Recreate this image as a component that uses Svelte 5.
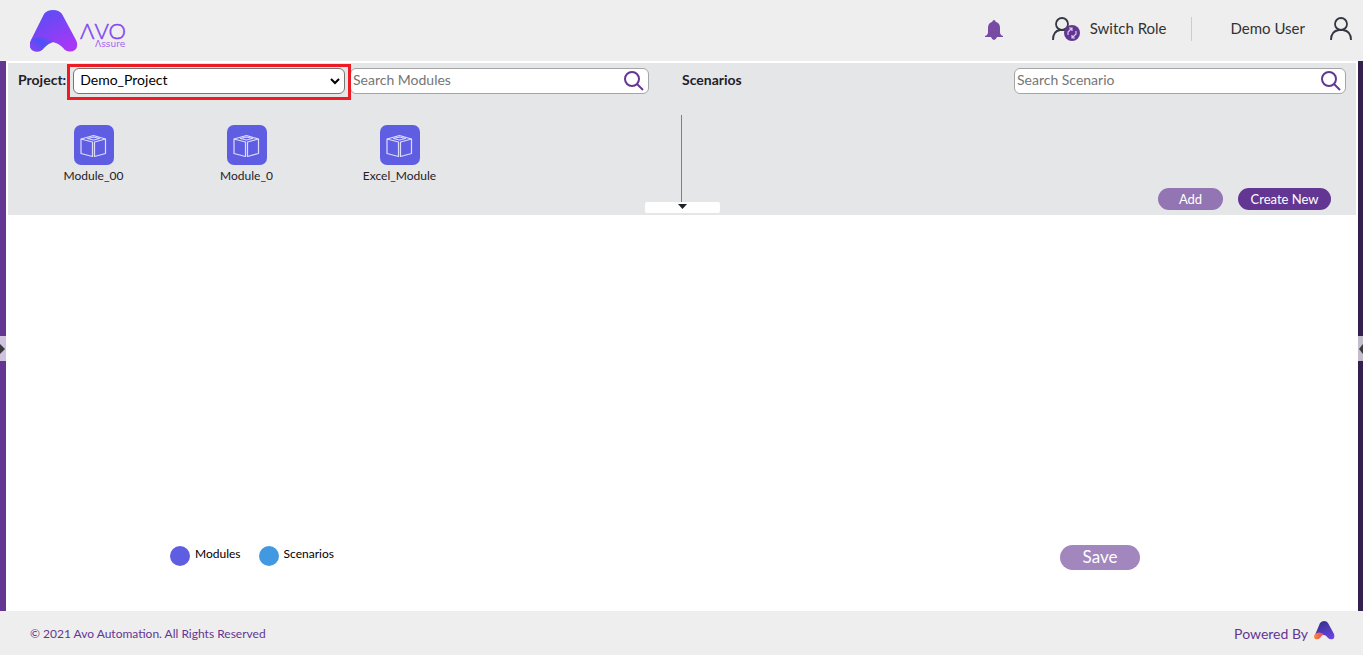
<script lang="ts">
    interface Module {
        id: number;
        name: string;
    }

    const projects = ["Demo_Project"];
    const modules: Module[] = [
        { id: 1, name: "Module_00" },
        { id: 2, name: "Module_0" },
        { id: 3, name: "Excel_Module" },
    ];
    const legend = [
        { label: "Modules", kind: "module" },
        { label: "Scenarios", kind: "scenario" },
    ];

    let project = $state("Demo_Project");
    let moduleQuery = $state("");
    let scenarioQuery = $state("");

    let shownModules = $derived(
        modules.filter((m) =>
            m.name.toLowerCase().includes(moduleQuery.toLowerCase()),
        ),
    );
</script>

{#snippet searchIcon()}
    <svg width="20" height="20" viewBox="0 0 20 20" aria-hidden="true">
        <circle cx="8" cy="8" r="7" />
        <path d="M13 13 L19 19" />
    </svg>
{/snippet}

<div class="page">
    <header>
        <svg class="logo" width="100" height="44" viewBox="0 0 100 44" role="img" aria-label="Avo Assure">
            <defs>
                <linearGradient id="mark" x1="0.3" y1="0" x2="0.9" y2="1">
                    <stop offset="0" stop-color="#5b4df5" />
                    <stop offset="1" stop-color="#b035f6" />
                </linearGradient>
                <linearGradient id="fold" x1="0" y1="0.8" x2="1" y2="0.2">
                    <stop offset="0" stop-color="#8a42f2" />
                    <stop offset="0.5" stop-color="#4d50f5" />
                    <stop offset="1" stop-color="#8a42f5" />
                </linearGradient>
            </defs>
            <path
                fill="url(#mark)"
                d="M14 5 Q17 1 23 1 Q29 1 32 5 L46 31 Q49 37 45 41 Q40 44 35 41 Q29 34 23 33 Q18 34 12 41 Q7 44 2 41 Q-2 37 1 31 Z"
            />
            <path
                fill="url(#fold)"
                d="M2 30 Q14 25 27 34 Q25 33 23 33 Q18 34 12 41 Q7 44 2 41 Q-2 37 2 30 Z"
            />
            <text class="brand" x="50" y="30">ΛVO</text>
            <text class="product" x="65" y="38">Λssure</text>
        </svg>

        <nav>
            <button class="bell" aria-label="Notifications">
                <svg width="20" height="20" viewBox="0 0 20 20">
                    <path
                        fill="#774ba3"
                        d="M10 0 Q11 0 12 2 Q16 3 16 8 L16 12 Q16 15 19 16 L19 17 L13 17 Q12 20 10 20 Q8 20 7 17 L1 17 L1 16 Q4 15 4 12 L4 8 Q4 3 8 2 Q9 0 10 0 Z"
                    />
                </svg>
            </button>
            <button class="switch">
                <svg width="28" height="24" viewBox="0 0 28 24" fill="none" stroke="#333740" stroke-width="1.8">
                    <circle cx="10" cy="7" r="6" />
                    <path d="M1 23 Q1 14 8 13 L13 13" />
                    <circle cx="20" cy="16" r="8" fill="#643693" stroke="none" />
                    <path
                        stroke="#d9c9ec"
                        stroke-width="1.2"
                        d="M16 18 L16 15 L20 11 M17 11 L20 11 L20 14 M24 14 L24 17 L20 21 M23 21 L20 21 L20 18"
                    />
                </svg>
                <span>Switch Role</span>
            </button>
            <span class="user">Demo User</span>
            <button class="profile" aria-label="Profile">
                <svg width="22" height="24" viewBox="0 0 22 24" fill="none" stroke="#333740" stroke-width="1.8">
                    <circle cx="11" cy="7" r="6" />
                    <path d="M1 23 Q1 14 9 13 L13 13 Q21 14 21 23" />
                </svg>
            </button>
        </nav>
    </header>

    <div class="body">
        <aside class="left">
            <button class="expand" aria-label="Open tasks">
                <svg width="6" height="12" viewBox="0 0 6 12"><path d="M0 1 L5 6 L0 11 Z" /></svg>
            </button>
        </aside>

        <main>
            <section class="panel">
                <div class="half">
                    <div class="toolbar">
                        <label class="title" for="project">Project:</label>
                        <div class="select-wrapper">
                            <select id="project" bind:value={project}>
                                {#each projects as name}
                                    <option value={name}>{name}</option>
                                {/each}
                            </select>
                            <svg class="chevron" width="10" height="8" viewBox="0 0 10 8" aria-hidden="true">
                                <path d="M1 1 L5 5 L9 1" />
                            </svg>
                        </div>
                        <div class="search">
                            <input type="text" placeholder="Search Modules" aria-label="Search Modules" bind:value={moduleQuery} />
                            {@render searchIcon()}
                        </div>
                    </div>
                    <div class="modules">
                        {#each shownModules as module (module.id)}
                            <button class="module">
                                <svg width="40" height="40" viewBox="0 0 40 40">
                                    <rect width="40" height="40" rx="7" fill="#5f5ee3" />
                                    <g fill="none" stroke="#dcdcfa" stroke-width="1.2" stroke-linejoin="round">
                                        <path d="M7 14 L18.5 17 L18.5 31.5 L7 28.5 Z" />
                                        <path d="M31.5 14 L20.5 17 L20.5 31.5 L31.5 28.5 Z" />
                                        <path d="M7 14 L19.5 10.5 L31.5 14" />
                                        <path d="M13.5 13.5 L19.5 12 L25.5 13.5 L19.5 15 Z" />
                                    </g>
                                </svg>
                                <span>{module.name}</span>
                            </button>
                        {/each}
                    </div>
                </div>

                <div class="half scenarios">
                    <div class="toolbar">
                        <span class="title">Scenarios</span>
                        <div class="search">
                            <input type="text" placeholder="Search Scenario" aria-label="Search Scenario" bind:value={scenarioQuery} />
                            {@render searchIcon()}
                        </div>
                    </div>
                    <div class="actions">
                        <button class="pill add">Add</button>
                        <button class="pill create">Create New</button>
                    </div>
                </div>

                <button class="collapse" aria-label="Toggle panel">
                    <svg width="9" height="5" viewBox="0 0 9 5"><path d="M0 0 L9 0 L4.5 5 Z" /></svg>
                </button>
            </section>

            <section class="canvas">
                <ul class="legend">
                    {#each legend as item}
                        <li><i class={item.kind}></i>{item.label}</li>
                    {/each}
                </ul>
                <button class="pill save">Save</button>
            </section>
        </main>

        <aside class="right">
            <button class="expand" aria-label="Open reference">
                <svg width="5" height="12" viewBox="0 0 5 12"><path d="M5 1 L1 6 L5 11 Z" /></svg>
            </button>
        </aside>
    </div>

    <footer>
        <span>© 2021 Avo Automation. All Rights Reserved</span>
        <span class="powered">
            Powered By
            <svg width="21" height="19" viewBox="0 0 21 19" aria-hidden="true">
                <defs>
                    <linearGradient id="small-mark" x1="0.3" y1="0" x2="0.8" y2="1">
                        <stop offset="0" stop-color="#33308a" />
                        <stop offset="1" stop-color="#6f43e8" />
                    </linearGradient>
                    <linearGradient id="small-fold">
                        <stop offset="0" stop-color="#fb8b35" />
                        <stop offset="1" stop-color="#e8456b" />
                    </linearGradient>
                </defs>
                <path
                    fill="url(#small-mark)"
                    d="M6 2 Q8 0 10 0 Q13 0 14 2 L20 13 Q21 17 19 18 Q16 19 14 17 Q12 14 10 14 L1 14 Z"
                />
                <path fill="url(#small-fold)" d="M1 13 Q5 10 10 13 Q8 14 6 17 Q4 19 1 18 Q-1 16 1 13 Z" />
            </svg>
        </span>
    </footer>
</div>

<style>
    :global(body) {
        margin: 0;
        font-family: Lato, "Liberation Sans", sans-serif;
        color: #1f2128;
    }

    .page {
        display: flex;
        flex-direction: column;
        min-height: 100vh;
    }

    button,
    input,
    select {
        font-family: inherit;
        color: inherit;
    }

    button {
        border: none;
        background: none;
        padding: 0;
        cursor: pointer;
    }

    svg {
        display: block;
        flex: none;
    }

    header {
        display: flex;
        align-items: center;
        justify-content: space-between;
        box-sizing: border-box;
        height: 61px;
        padding: 0 11px 0 30px;
        background: #eeeeee;
    }

    .brand {
        font-size: 22px;
        font-weight: 300;
        fill: #8045f2;
        stroke: #8045f2;
        stroke-width: 0.5;
    }

    .product {
        font-family: "DejaVu Sans", sans-serif;
        font-size: 9px;
        fill: #a562ee;
    }

    nav {
        display: flex;
        align-items: center;
        padding-bottom: 4px;
        font-size: 15px;
        color: #333333;
    }

    .bell {
        padding-top: 2px;
        margin-right: 48px;
    }

    .switch {
        display: flex;
        align-items: center;
        gap: 10px;
        padding-right: 24px;
        border-right: 1px solid #cccccc;
        font-size: 15px;
    }

    .switch span,
    .user {
        padding-bottom: 2px;
    }

    .user {
        margin: 0 25px 0 39px;
    }

    .body {
        display: flex;
        flex: 1;
    }

    aside {
        display: flex;
        align-items: center;
        width: 6px;
    }

    .left {
        background: #643693;
    }

    .right {
        width: 5px;
        background: #34204f;
    }

    .expand {
        display: flex;
        align-items: center;
        width: 100%;
        height: 25px;
        margin-bottom: -25px;
        background: #d1c3df;
        fill: #3b3b3b;
    }

    .right .expand {
        background: #c3bccb;
    }

    main {
        display: flex;
        flex-direction: column;
        flex: 1;
        padding: 2px 2px 0;
    }

    .panel {
        position: relative;
        display: grid;
        grid-template-columns: 1fr 1fr;
        height: 152px;
        background: #e5e6e8;
    }

    .half {
        display: flex;
        flex-direction: column;
        padding: 5px 33px 0 10px;
    }

    .scenarios {
        padding: 5px 10px 0 0;
    }

    .toolbar {
        display: flex;
        align-items: center;
        height: 26px;
    }

    .title {
        padding-bottom: 4px;
        font-size: 14px;
        font-weight: 700;
    }

    .select-wrapper {
        position: relative;
        flex: 1;
        margin: 0 5px 0 7px;
    }

    /* highlight frame around the project picker */
    .select-wrapper::after {
        content: "";
        position: absolute;
        inset: -4px -6px -6px;
        border: 3px solid #ed1c24;
        pointer-events: none;
        z-index: 1;
    }

    select {
        display: block;
        width: 100%;
        height: 26px;
        padding: 0 6px 3px;
        border: 1px solid #767676;
        border-radius: 6px;
        background: white;
        color: black;
        font-size: 14px;
        appearance: none;
    }

    .chevron {
        position: absolute;
        top: 10px;
        right: 5px;
        fill: none;
        stroke: black;
        stroke-width: 2;
        pointer-events: none;
    }

    .search {
        display: flex;
        align-items: center;
        box-sizing: border-box;
        width: 299px;
        height: 26px;
        padding: 0 4px 0 2px;
        border: 1px solid #a5a5a5;
        border-radius: 6px;
        background: white;
    }

    .search input {
        flex: 1;
        min-width: 0;
        padding: 0 0 3px;
        border: none;
        outline: none;
        background: none;
        font-size: 14px;
    }

    .search input::placeholder {
        color: #757575;
    }

    .search svg {
        fill: none;
        stroke: #643693;
        stroke-width: 2;
    }

    .scenarios .search {
        width: 50%;
        margin-left: auto;
    }

    .modules {
        display: flex;
        padding-top: 31px;
        margin-left: -1px;
    }

    .module {
        display: flex;
        flex-direction: column;
        align-items: center;
        gap: 3px;
        width: 153px;
        font-size: 12px;
        line-height: 16px;
    }

    .scenarios::before {
        content: "";
        position: absolute;
        top: 52px;
        bottom: 13px;
        right: 50%;
        border-left: 1px solid #808080;
    }

    .actions {
        display: flex;
        justify-content: flex-end;
        gap: 15px;
        margin: auto 15px 5px 0;
    }

    .pill {
        height: 22px;
        border-radius: 13px;
        background: #643693;
        color: white;
        font-size: 13px;
    }

    .add {
        width: 65px;
        background: #9475b4;
    }

    .create {
        width: 93px;
    }

    .collapse {
        position: absolute;
        bottom: 2px;
        left: 50%;
        display: flex;
        justify-content: center;
        width: 75px;
        height: 11px;
        margin-left: -37px;
        padding-top: 2px;
        border-radius: 2px;
        background: white;
        fill: #1f2128;
    }

    .canvas {
        display: flex;
        align-items: flex-start;
        justify-content: space-between;
        margin: auto 216px 41px 162px;
    }

    .legend {
        display: flex;
        gap: 18px;
        margin: 0;
        padding: 1px 0 0;
        list-style: none;
        color: black;
        font-size: 12px;
        line-height: 16px;
    }

    .legend li {
        display: flex;
        align-items: flex-start;
        gap: 5px;
    }

    .legend i {
        width: 20px;
        height: 20px;
        border-radius: 50%;
        background: #5f5ee3;
    }

    .legend .scenario {
        background: #4299e2;
    }

    .save {
        width: 80px;
        height: 25px;
        padding-bottom: 2px;
        background: #a286be;
        font-size: 17px;
    }

    footer {
        display: flex;
        align-items: center;
        justify-content: space-between;
        box-sizing: border-box;
        height: 44px;
        padding: 0 28px 0 30px;
        background: #eeeeee;
        color: #643693;
        font-size: 12px;
    }

    .powered {
        display: flex;
        align-items: center;
        gap: 6px;
        font-size: 14px;
    }

    .powered svg {
        margin-bottom: 5px;
    }
</style>
